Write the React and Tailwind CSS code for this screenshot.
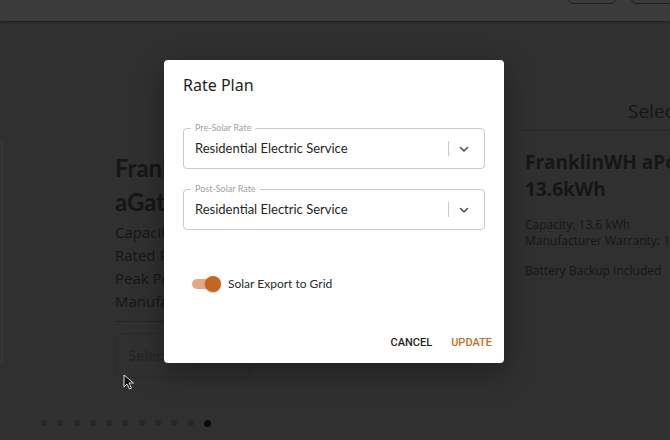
import React from 'react';

// Rate plan dialog over a dimmed battery carousel
const dots = [0, 1, 2, 3, 4, 5, 6, 7, 8, 9, 10];

function RateSelect({ label }) {
  return (
    <div className="relative h-[41px] rounded-[4px] border border-[#c9c9c9] flex items-center pl-[11px] pr-[14px]">
      <span className="absolute -top-[7px] left-[7px] bg-white px-[4px] text-[9px] leading-[12px] text-[#a3a3a3]">{label}</span>
      <span className="flex-1 text-[13px] text-[#1f1f1f]">Residential Electric Service</span>
      <span className="w-px h-[15px] bg-[#c9c9c9] mr-[9px]"></span>
      <svg width="12" height="12" viewBox="0 0 12 12" className="text-[#4a4a4a]">
        <path d="M2.5 4.5 L6 8 L9.5 4.5" fill="none" stroke="currentColor" strokeWidth="1.5" strokeLinecap="round" strokeLinejoin="round" />
      </svg>
    </div>
  );
}

export default function App() {
  return (
    <div className="relative w-[670px] h-[440px] overflow-hidden bg-[#303030] font-['Lato',sans-serif]">
      {/* top bar */}
      <div className="relative h-[21px] bg-[#3a3b3a] shadow-[0_1px_2px_rgba(0,0,0,0.45)] flex justify-end gap-[15px]">
        <div className="w-[48px] h-[25px] -mt-[21px] rounded-[5px] border border-[#1e1e1e]"></div>
        <div className="w-[48px] h-[25px] -mt-[21px] -mr-[9px] rounded-[5px] border border-[#1e1e1e]"></div>
      </div>

      {/* carousel */}
      <div className="flex h-[380px]">
        <div className="shrink-0 w-[3px] mt-[120px] h-[222px] border-r border-[#3c3c3c] bg-[#323232]"></div>
        <div className="shrink-0 w-[400px] ml-[112px] pt-[129px] text-[#161616]">
          <div className="text-[24px] font-bold leading-[35px]">FranklinWH</div>
          <div className="text-[24px] font-bold leading-[35px] -mt-[1px]">aGate</div>
          <div className="mt-[2px] text-[15px] leading-[23px] font-['Open_Sans',sans-serif]">
            <div>Capacity: 13.6 kWh</div>
            <div>Rated Power: 5 kW</div>
            <div>Peak Power: 10 kW</div>
            <div>Manufacturer Warranty: 12 Years</div>
          </div>
          <div className="mt-[8px] mr-[30px] h-px bg-[#262626]"></div>
          <div className="mt-[11px] w-[136px] h-[45px] rounded-[8px] border border-[#2a2a2a] flex items-center pl-[12px] text-[15px] font-bold text-[#272727]">Select</div>
        </div>
        <div className="min-w-0 flex-1 pt-[78px] text-[#161616] font-['Open_Sans',sans-serif] whitespace-nowrap">
          <div className="pl-[113px] text-[19px] leading-[24px]">Selected</div>
          <div className="mt-[7px] ml-[5px] h-px bg-[#282828]"></div>
          <div className="ml-[10px] mt-[18px] text-[19px] font-bold leading-[27px]">FranklinWH aPower</div>
          <div className="ml-[10px] text-[19px] font-bold leading-[27px]">13.6kWh</div>
          <div className="ml-[10px] mt-[14px] text-[12px] leading-[16px]">
            <div>Capacity: 13.6 kWh</div>
            <div>Manufacturer Warranty: 12 Years</div>
            <div className="mt-[14px]">Battery Backup Included</div>
          </div>
        </div>
      </div>

      {/* pagination dots */}
      <div className="absolute left-[41px] top-[420px] flex gap-[10.3px]">
        {dots.map((d) => (
          <span key={d} className={d === 10 ? 'w-[7px] h-[7px] rounded-full bg-[#0c0c0c]' : 'w-[6px] h-[6px] rounded-full bg-[#272727]'}></span>
        ))}
      </div>

      {/* cursor */}
      <svg className="absolute left-[123px] top-[374px]" width="12" height="16" viewBox="0 0 12 16">
        <path d="M1 1 L1 13 L4 10 L6.5 15 L8.5 14 L6 9 L10.5 9 Z" fill="#111" stroke="#ddd" strokeWidth="1" strokeLinejoin="round" />
      </svg>

      {/* dialog */}
      <div className="absolute left-[164px] top-[60px] w-[340px] h-[303px] bg-white rounded-[4px] shadow-[0_10px_30px_rgba(0,0,0,0.35)] flex flex-col px-[19px]">
        <div className="pt-[14px] text-[16px] leading-[22px] text-[#1f1f1f] font-['Noto_Sans',sans-serif]">Rate Plan</div>
        <div className="mt-[32px] flex flex-col gap-[20px]">
          <RateSelect label="Pre-Solar Rate" />
          <RateSelect label="Post-Solar Rate" />
        </div>
        <div className="mt-[45px] ml-[9px] flex items-center">
          <div className="relative w-[28px] h-[10px] rounded-full bg-[#e3a984] mr-[8px]">
            <span className="absolute -right-[1px] -top-[3px] w-[16px] h-[16px] rounded-full bg-[#c4661f] shadow-[0_1px_2px_rgba(0,0,0,0.25)]"></span>
          </div>
          <span className="text-[12px] text-[#2a2a2a]">Solar Export to Grid</span>
        </div>
        <div className="mt-auto mb-[13px] -mr-[7px] flex justify-end gap-[19px] font-['Roboto',sans-serif] text-[11px] font-medium leading-[14px]">
          <span className="text-[#1f1f1f]">CANCEL</span>
          <span className="text-[#c66e28]">UPDATE</span>
        </div>
      </div>
    </div>
  );
}
